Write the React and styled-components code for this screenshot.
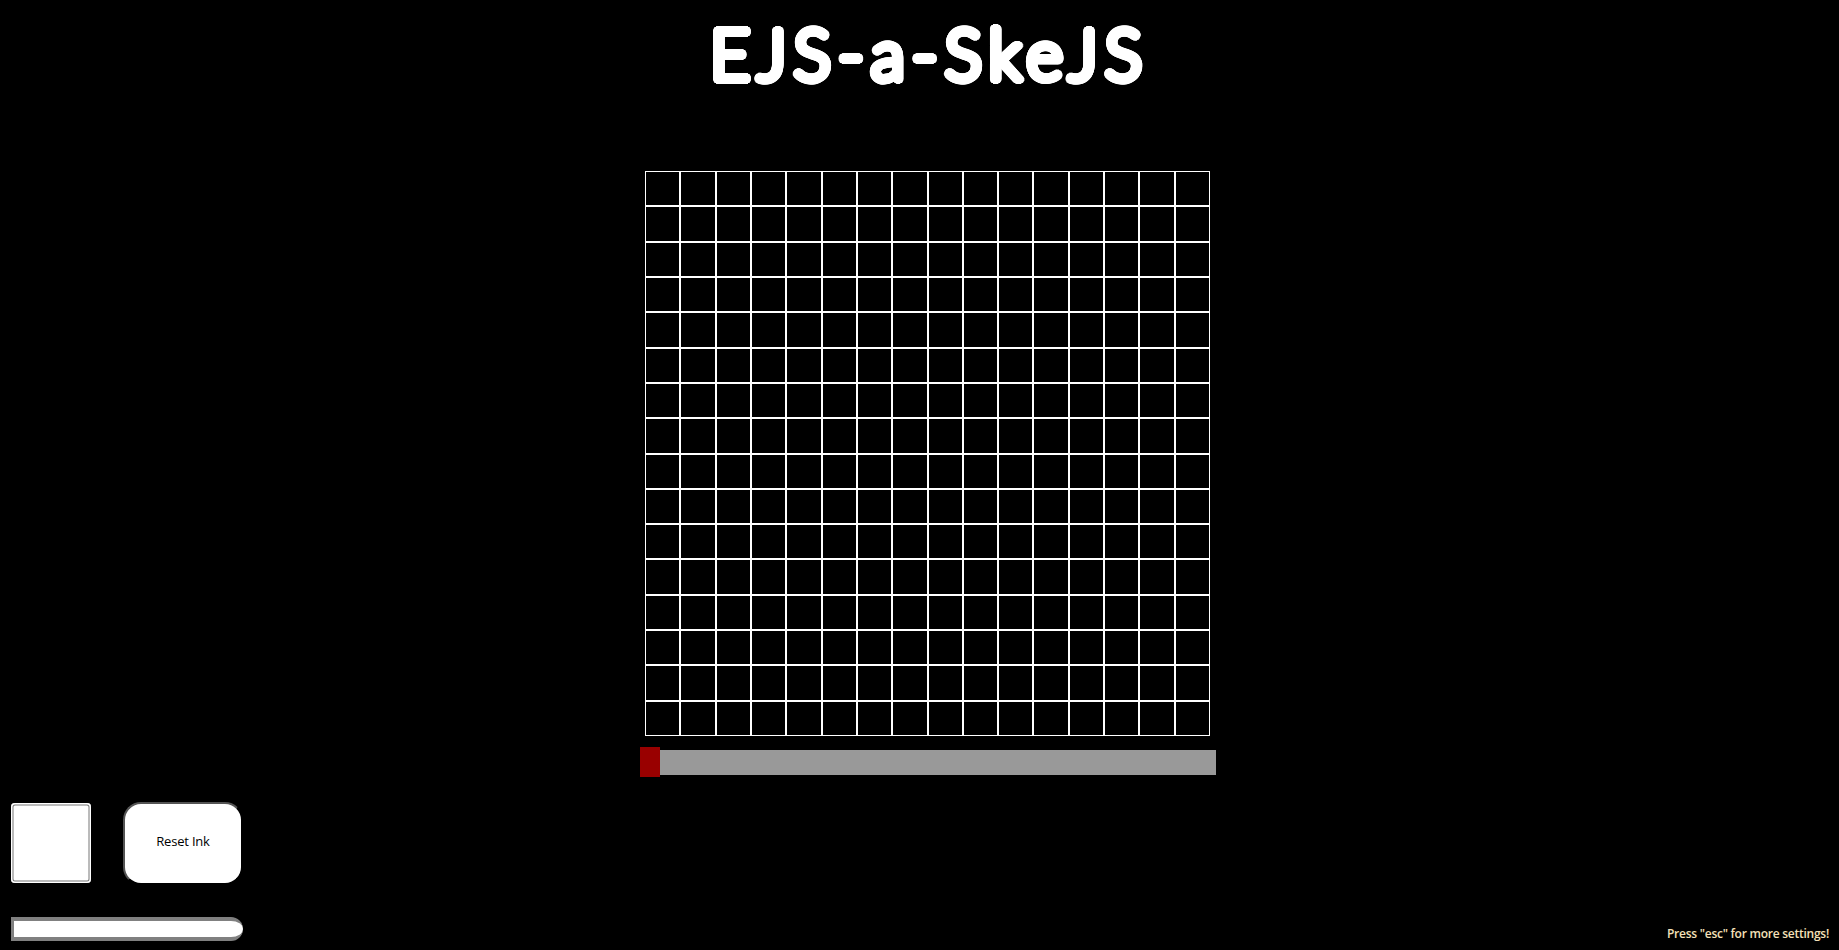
import React from 'react'
import styled, { createGlobalStyle } from 'styled-components'

const GRID_SIZE = 16

// fattens the thin title letters into a round-ended marker stroke
const markerStroke = (radius, steps = 24) =>
  Array.from({ length: steps }, (_, i) => {
    const angle = (i / steps) * Math.PI * 2
    const x = (Math.cos(angle) * radius).toFixed(2)
    const y = (Math.sin(angle) * radius).toFixed(2)
    return `${x}px ${y}px 0 #fff`
  }).join(', ')

const Global = createGlobalStyle`
  html, body {
    margin: 0;
    height: 100%;
    background: #000;
    overflow: hidden;
  }
  #root {
    height: 100%;
  }
`

const Page = styled.div`
  width: 1839px;
  height: 950px;
  display: grid;
  grid-template-columns: 1fr auto;
  grid-template-rows: 171px 606px 1fr;
  font-family: "Open Sans", "Noto Sans", sans-serif;
`

const Header = styled.header`
  grid-column: 1 / 3;
  padding-left: 20px;
  display: flex;
  justify-content: center;
`

const Title = styled.h1`
  margin: 13px 0 0;
  height: 80px;
  font-family: "Lato", sans-serif;
  font-weight: 300;
  font-size: 70px;
  line-height: 80px;
  letter-spacing: 7px;
  color: #fff;
  text-shadow: ${markerStroke(4)};
`

const Stage = styled.main`
  grid-column: 1 / 3;
  padding-left: 16px;
  display: flex;
  flex-direction: column;
  align-items: center;
`

const Board = styled.div`
  width: 565px;
  height: 565px;
  display: grid;
  grid-template-columns: repeat(${GRID_SIZE}, 1fr);
  grid-template-rows: repeat(${GRID_SIZE}, 1fr);
`

const Cell = styled.div`
  box-sizing: border-box;
  border: 1px solid #fff;
`

const SizeSlider = styled.div`
  margin-top: 14px;
  width: 576px;
  height: 25px;
  background: #999;
  position: relative;
`

const SizeThumb = styled.div`
  position: absolute;
  left: 0;
  top: -3px;
  width: 20px;
  height: 30px;
  background: #990000;
`

const Controls = styled.section`
  padding: 25px 0 0 11px;
  display: flex;
  flex-direction: column;
  align-items: flex-start;
  gap: 32px;
`

const ButtonRow = styled.div`
  display: flex;
  align-items: flex-start;
  gap: 32px;
`

const Swatch = styled.div`
  box-sizing: border-box;
  width: 80px;
  height: 80px;
  margin-top: 1px;
  background: #fff;
  border-radius: 4px;
  box-shadow: inset 0 0 0 1.5px #fff, inset 0 0 0 2.5px #767676;
`

const ResetButton = styled.button`
  box-sizing: border-box;
  width: 120px;
  height: 83px;
  padding: 0 0 5px;
  background: #fff;
  color: #000;
  border: 2px outset #000;
  border-radius: 18px;
  font-family: "Open Sans", sans-serif;
  font-size: 13px;
  letter-spacing: -0.2px;
`

const InkBar = styled.div`
  box-sizing: border-box;
  width: 232px;
  height: 24px;
  background: #fff;
  border: solid #808080;
  border-width: 4px 0 4px 3px;
  border-radius: 0 12px 12px 0;
`

const Hint = styled.p`
  grid-column: 2;
  grid-row: 3;
  margin: 0;
  align-self: end;
  padding: 0 10px 8px 0;
  font-size: 12px;
  font-weight: 600;
  letter-spacing: -0.25px;
  color: #f5e0b8;
`

export default function App() {
  const cells = Array.from({ length: GRID_SIZE * GRID_SIZE }, (_, i) => i)

  return (
    <Page>
      <Global />
      <Header>
        <Title>EJS-a-SkeJS</Title>
      </Header>
      <Stage>
        <Board>
          {cells.map((i) => <Cell key={i} />)}
        </Board>
        <SizeSlider>
          <SizeThumb />
        </SizeSlider>
      </Stage>
      <Controls>
        <ButtonRow>
          <Swatch />
          <ResetButton>Reset Ink</ResetButton>
        </ButtonRow>
        <InkBar />
      </Controls>
      <Hint>Press "esc" for more settings!</Hint>
    </Page>
  )
}
